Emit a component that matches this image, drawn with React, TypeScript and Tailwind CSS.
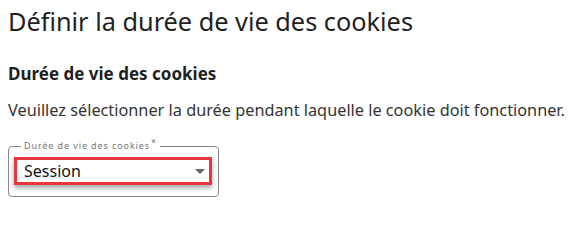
import React from 'react';

export default function App() {
  return (
    <div className="w-[573px] h-[208px] overflow-hidden bg-white px-2 pt-[4px] font-['Noto_Sans',sans-serif] text-[#1f1f1f]">
      <h1 className="text-[25.3px] leading-[34px] font-normal">Définir la durée de vie des cookies</h1>
      <h2 className="mt-[24px] text-[17px] leading-[24px] font-bold">Durée de vie des cookies</h2>
      <p className="mt-[13px] whitespace-nowrap text-[16.3px] leading-[22px] text-[#333]">
        Veuillez sélectionner la durée pendant laquelle le cookie doit fonctionner.
      </p>
      <div className="relative mt-[25px] w-[211px] h-[51px] rounded-[4px] border border-[#8a8a8a] pl-[5px] pt-[10px]">
        <span className="absolute left-[12px] -top-[7px] bg-white px-[3px] text-[9px] leading-[12px] tracking-[0.1em] text-[#777]">
          Durée de vie des cookies<span className="relative -top-[3px] ml-[1px] text-[9px]">*</span>
        </span>
        <div className="flex h-[28px] w-[198px] items-center justify-between border-[3px] border-[#e8363f] pl-[7px] pr-[4px] shadow-[0_3px_5px_rgba(0,0,0,0.35)]">
          <span className="text-[16px] leading-none text-[#111]">Session</span>
          <svg width="10" height="5" viewBox="0 0 10 5" className="fill-[#666]">
            <path d="M0 0 L10 0 L5 5 Z" />
          </svg>
        </div>
      </div>
    </div>
  );
}
